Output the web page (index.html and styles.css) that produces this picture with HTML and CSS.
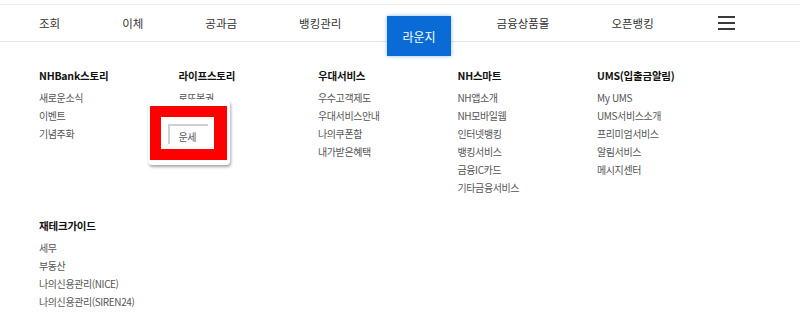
FILE: index.html
```html
<!DOCTYPE html>
<html lang="ko">
<head>
    <meta charset="UTF-8">
    <meta name="viewport" content="width=device-width, initial-scale=1.0">
    <title>NH 라운지</title>
    <link rel="stylesheet" href="styles.css">
</head>
<body>

    <div class="gnb">
        <a class="gnb-item">조회</a>
        <a class="gnb-item">이체</a>
        <a class="gnb-item">공과금</a>
        <a class="gnb-item">뱅킹관리</a>
        <a class="gnb-item lounge">라운지</a>
        <a class="gnb-item">금융상품몰</a>
        <a class="gnb-item">오픈뱅킹</a>
        <a class="gnb-menu"><span></span><span></span><span></span></a>
    </div>

    <div class="mega">
        <div class="col">
            <h3>NHBank스토리</h3>
            <ul>
                <li>새로운소식</li>
                <li>이벤트</li>
                <li>기념주화</li>
            </ul>
        </div>
        <div class="col">
            <h3>라이프스토리</h3>
            <ul>
                <li class="has-pop">로또복권
                    <div class="pop">
                        <div class="pop-red">
                            <div class="pop-field">운세</div>
                        </div>
                    </div>
                </li>
            </ul>
        </div>
        <div class="col">
            <h3>우대서비스</h3>
            <ul>
                <li>우수고객제도</li>
                <li>우대서비스안내</li>
                <li>나의쿠폰함</li>
                <li>내가받은혜택</li>
            </ul>
        </div>
        <div class="col">
            <h3>NH스마트</h3>
            <ul>
                <li>NH앱소개</li>
                <li>NH모바일웹</li>
                <li>인터넷뱅킹</li>
                <li>뱅킹서비스</li>
                <li>금융IC카드</li>
                <li>기타금융서비스</li>
            </ul>
        </div>
        <div class="col">
            <h3>UMS(입출금알림)</h3>
            <ul>
                <li>My UMS</li>
                <li>UMS서비스소개</li>
                <li>프리미엄서비스</li>
                <li>알림서비스</li>
                <li>메시지센터</li>
            </ul>
        </div>
        <div class="col row2">
            <h3>재테크가이드</h3>
            <ul>
                <li>세무</li>
                <li>부동산</li>
                <li>나의신용관리(NICE)</li>
                <li>나의신용관리(SIREN24)</li>
            </ul>
        </div>
    </div>

</body>
</html>
```

FILE: styles.css
```css
body {
    margin: 0;
    padding: 0;
    background: #fff;
    color: #333;
    font-family: "Noto Sans CJK KR", "Noto Sans", sans-serif;
}
ul {
    list-style: none;
    margin: 0;
    padding: 0;
}
.gnb {
    margin-top: 4px;
    height: 36px;
    border-top: 1px solid #efefef;
    border-bottom: 1px solid #e6e6e6;
    display: flex;
    align-items: center;
    gap: 62px;
    padding-left: 39px;
    font-size: 11.5px;
    color: #333;
}
.gnb-item {
    white-space: nowrap;
}
.lounge {
    align-self: flex-start;
    margin: 11px -16px 0;
    height: 40px;
    padding: 0 15px;
    display: flex;
    align-items: center;
    font-size: 12px;
    background: #0b6bd6;
    color: #fff;
    box-shadow: 0 0 4px rgba(11, 107, 214, 0.45);
}
.gnb-menu {
    display: flex;
    flex-direction: column;
    gap: 4px;
    width: 17px;
    margin-left: 2px;
}
.gnb-menu span {
    height: 2px;
    background: #3a3a3a;
}
.mega {
    display: grid;
    grid-template-columns: repeat(5, 139.5px);
    padding: 26px 0 0 39px;
    row-gap: 21px;
}
.col h3 {
    margin: 0 0 5px;
    font-size: 10.5px;
    line-height: 16px;
    font-weight: bold;
    color: #111;
    letter-spacing: -0.2px;
}
.col li {
    font-size: 10px;
    line-height: 18px;
    color: #555;
    letter-spacing: -0.4px;
}
.has-pop {
    position: relative;
}
.pop {
    position: absolute;
    left: -31px;
    top: 11px;
    width: 82px;
    background: #fff;
    border-radius: 4px;
    box-shadow: 1px 2px 3px rgba(0, 0, 0, 0.35);
    padding: 6px 3px 5px 2px;
    box-sizing: border-box;
}
.pop-red {
    border: 11px solid #ff0000;
    border-right-width: 13px;
    background: #fff;
    padding: 7px 6px 5px 7px;
}
.pop-field {
    border-top: 2px solid #d0d0d0;
    border-left: 2px solid #d0d0d0;
    height: 18px;
    line-height: 22px;
    padding-left: 9px;
    color: #555;
}
```
